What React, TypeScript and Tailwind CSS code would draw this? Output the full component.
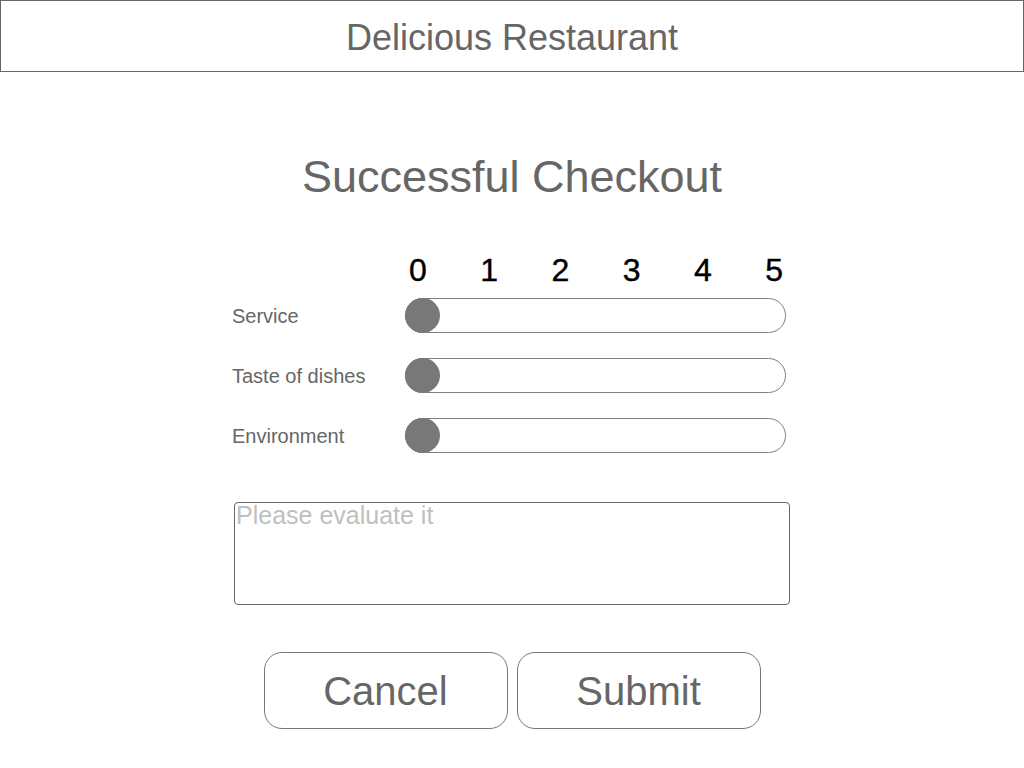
const criteria = ['Service', 'Taste of dishes', 'Environment'];
const scale = [0, 1, 2, 3, 4, 5];

function RatingRow({ label }: { label: string }) {
  return (
    <div className="flex items-center h-[35px]">
      <div className="-ml-[2px] w-[173px] text-[20px] leading-none text-[#666]">{label}</div>
      <div className="relative w-[381px] h-[35px] rounded-full border border-[#808080] bg-white">
        <div className="absolute -left-px -top-px w-[35px] h-[35px] rounded-full bg-[#787878]" />
      </div>
    </div>
  );
}

export default function App() {
  return (
    <div className="w-full h-[768px] bg-white font-['Liberation_Sans',Arial,sans-serif]">
      <header className="h-[72px] pt-[3px] border border-[#666] flex items-center justify-center text-[36px] leading-none text-[#666]">
        Delicious Restaurant
      </header>

      <h1 className="mt-[82px] text-center text-[45px] leading-none text-[#666]">Successful Checkout</h1>

      <div className="mx-auto w-[556px] mt-[55px]">
        <div className="flex">
          <div className="w-[171px]" />
          <div className="w-[381px] flex justify-between pl-[4px] pr-[3px] text-[32px] leading-none text-black [-webkit-text-stroke:0.4px_black]">
            {scale.map((n) => (
              <span key={n}>{n}</span>
            ))}
          </div>
        </div>

        <div className="mt-[12px] flex flex-col gap-[25px]">
          {criteria.map((c) => (
            <RatingRow key={c} label={c} />
          ))}
        </div>

        <textarea
          placeholder="Please evaluate it"
          className="mt-[49px] block w-full h-[103px] resize-none rounded-[4px] border border-[#666] p-0 pl-px text-[25px] leading-none text-[#666] placeholder:text-[#c0c0c0] outline-none"
        />
      </div>

      <div className="mt-[47px] flex justify-center gap-[9px]">
        <button className="w-[244px] h-[77px] rounded-[18px] border border-[#777] bg-white text-[40px] leading-none text-[#666]">
          Cancel
        </button>
        <button className="w-[244px] h-[77px] rounded-[18px] border border-[#777] bg-white text-[40px] leading-none text-[#666]">
          Submit
        </button>
      </div>
    </div>
  );
}
